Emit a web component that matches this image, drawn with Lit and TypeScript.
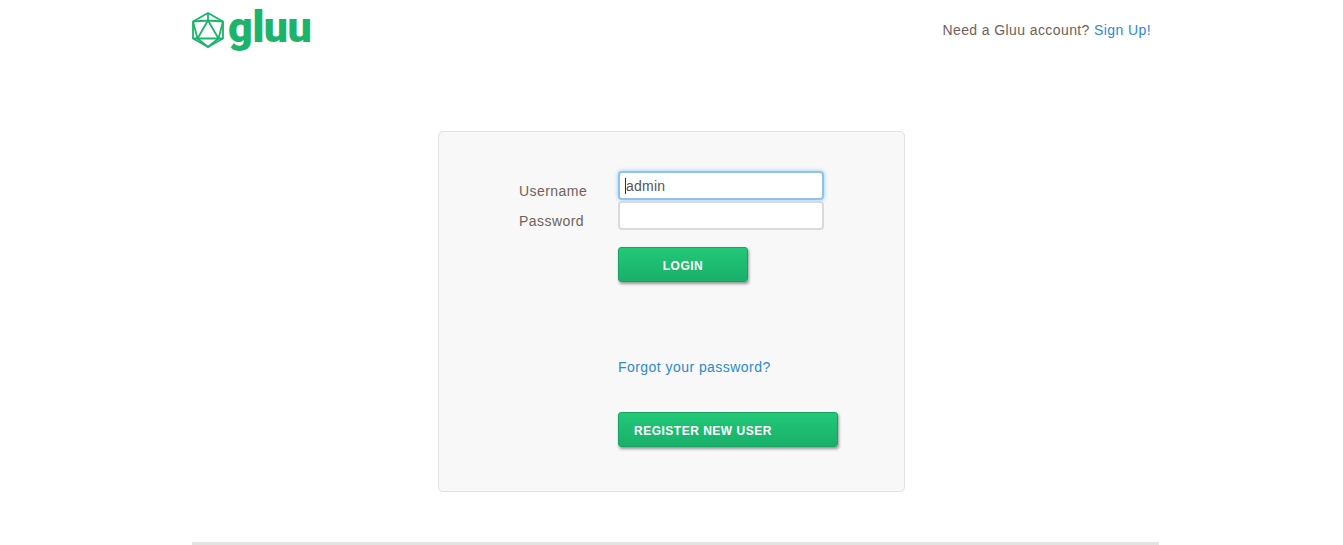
import { LitElement, html, css } from "lit";
import { customElement } from "lit/decorators.js";

@customElement("app-root")
export class AppRoot extends LitElement {
  static styles = css`
    :host {
      display: block;
      font-family: "Liberation Sans", Arial, sans-serif;
      font-size: 14px;
      letter-spacing: 0.45px;
      color: #6f6259;
      background: #fff;
      height: 545px;
      overflow: hidden;
    }
    a {
      color: #2a8bd0;
      text-decoration: none;
    }
    .wrap {
      width: 967px;
      margin: 0 auto 0 192px;
    }
    .top {
      height: 60px;
      display: flex;
      justify-content: space-between;
      align-items: flex-start;
      padding-right: 8px;
    }
    .logo {
      display: flex;
      align-items: flex-start;
      height: 56px;
    }
    .logo svg {
      margin-top: 12px;
      flex: none;
    }
    .word {
      font-family: Roboto, sans-serif;
      font-weight: 900;
      font-size: 43px;
      line-height: 42px;
      letter-spacing: -0.5px;
      color: #1cb36a;
      margin: 6px 0 0 4px;
    }
    .tall {
      font-size: 45px;
      line-height: 42px;
      letter-spacing: -1px;
    }
    .signup {
      margin-top: 22px;
      line-height: 16px;
      letter-spacing: 0.4px;
    }
    .card {
      box-sizing: border-box;
      width: 467px;
      height: 361px;
      margin: 71px 0 50px 246px;
      padding: 39px 0 0 80px;
      background: #f8f8f8;
      border: 1px solid #e2e2e2;
      border-radius: 5px;
    }
    .form {
      display: grid;
      grid-template-columns: 99px 206px;
      grid-auto-rows: 30px;
      align-items: start;
    }
    label {
      line-height: 16px;
      padding-top: 12px;
    }
    .field {
      box-sizing: border-box;
      display: block;
      width: 206px;
      height: 29px;
      padding: 0 6px;
      background: #fff;
      border: 2px solid #dadada;
      border-radius: 4px;
      line-height: 26px;
      color: #555;
      letter-spacing: 0.25px;
    }
    .field.focus {
      border: 2px solid #8ec3ee;
      box-shadow: 0 0 4px rgba(82, 168, 236, 0.6);
      padding-left: 5px;
    }
    .caret {
      display: inline-block;
      width: 1px;
      height: 16px;
      background: #333;
      vertical-align: -3px;
    }
    .actions {
      margin-left: 99px;
    }
    .btn {
      box-sizing: border-box;
      display: block;
      height: 35px;
      background: linear-gradient(#22c878, #19b06a);
      border: 1px solid #15a561;
      border-radius: 3px;
      box-shadow: 1px 2px 3px rgba(0, 0, 0, 0.4);
      color: #fff;
      font-weight: 700;
      font-size: 12px;
      letter-spacing: 0.5px;
      line-height: 36px;
      padding: 0;
    }
    .login {
      width: 130px;
      margin-top: 16px;
      text-align: center;
    }
    .forgot {
      margin-top: 77px;
      line-height: 16px;
    }
    .register {
      width: 220px;
      margin-top: 37px;
      padding-left: 15px;
    }
    .rule {
      height: 3px;
      background: #e4e4e4;
    }
  `;

  render() {
    return html`
      <div class="wrap">
        <div class="top">
          <div class="logo">
            <svg width="32" height="36" viewBox="0 0 32 36" fill="none" stroke="#1cb36a" stroke-width="1.8" stroke-linejoin="round">
              <path d="M16 1 31 9.5V26.5L16 35 1 26.5V9.5Z" />
              <path d="M16 8.5 26.5 26.5H5.5Z" />
              <path d="M16 1V8.5M1 9.5 16 8.5 31 9.5M1 9.5 5.5 26.5M31 9.5 26.5 26.5M1 26.5H5.5M31 26.5H26.5M5.5 26.5 16 35 26.5 26.5" />
            </svg>
            <span class="word">g<span class="tall">l</span>uu</span>
          </div>
          <div class="signup">Need a Gluu account? <a href="#">Sign Up</a><a href="#">!</a></div>
        </div>
        <div class="card">
          <div class="form">
            <label>Username</label>
            <div class="field focus"><span class="caret"></span>admin</div>
            <label>Password</label>
            <div class="field"></div>
          </div>
          <div class="actions">
            <div class="btn login">LOGIN</div>
            <div class="forgot"><a href="#">Forgot your password?</a></div>
            <div class="btn register">REGISTER NEW USER</div>
          </div>
        </div>
        <div class="rule"></div>
      </div>
    `;
  }
}
